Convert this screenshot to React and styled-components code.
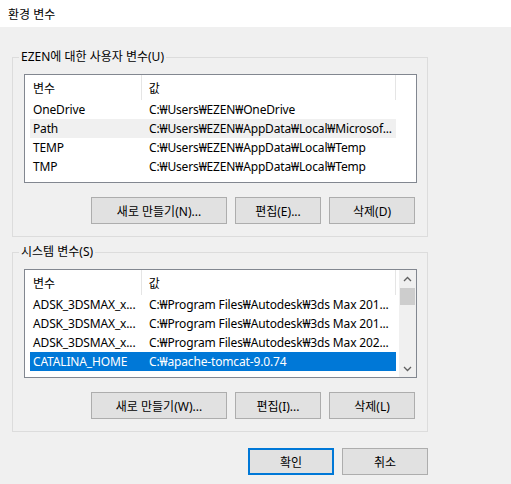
import React from 'react';
import styled, { createGlobalStyle } from 'styled-components';

const GlobalStyle = createGlobalStyle`
  body {
    margin: 0;
    background: #f0f0f0;
    font-family: "Noto Sans", "Noto Sans CJK KR", sans-serif;
    font-size: 12px;
    color: #000;
  }
`;

const Window = styled.div`
  width: 511px;
  height: 484px;
  overflow: hidden;
  background: #f0f0f0;
`;

const TitleBar = styled.div`
  height: 27px;
  background: #fff;
  padding-left: 8px;
  display: flex;
  align-items: center;
  font-size: 12px;
`;

const Content = styled.div`
  width: 416px;
  margin-left: 12px;
  padding-top: 30px;
`;

const Group = styled.div`
  position: relative;
  border: 1px solid #dcdcdc;
  padding: 16px 10px 12px 11px;
  margin-top: ${(p) => p.$gap || 0}px;
`;

const GroupLabel = styled.span`
  position: absolute;
  top: -9px;
  left: 6px;
  padding: 0 2px;
  line-height: 16px;
  background: #f0f0f0;
`;

const List = styled.div`
  height: 107px;
  border: 1px solid #828790;
  background: #fff;
  display: flex;
  overflow: hidden;
`;

const ListMain = styled.div`
  width: 371px;
  flex-shrink: 0;
`;

const Header = styled.div`
  display: flex;
  height: 25px;
  align-items: stretch;
`;

const HeaderCell = styled.div`
  width: ${(p) => p.$w}px;
  padding-left: ${(p) => p.$pad}px;
  box-sizing: border-box;
  border-right: 1px solid #e5e5e5;
  display: flex;
  align-items: center;
`;

const Row = styled.div`
  display: flex;
  height: 19px;
  align-items: center;
  margin-left: 5px;
  white-space: nowrap;
  letter-spacing: -0.15px;
  background: ${(p) => (p.$selected ? '#0078d7' : p.$hover ? '#f0f0f0' : 'transparent')};
  color: ${(p) => (p.$selected ? '#fff' : '#000')};
`;

const Cell = styled.div`
  width: ${(p) => p.$w}px;
  padding-left: ${(p) => p.$pad}px;
  box-sizing: border-box;
  overflow: hidden;
`;

const ScrollBar = styled.div`
  width: 17px;
  margin-left: auto;
  background: #f0f0f0;
  display: flex;
  flex-direction: column;
  align-items: center;
`;

const Arrow = styled.div`
  height: 17px;
  width: 17px;
  display: flex;
  align-items: center;
  justify-content: center;
`;

const Thumb = styled.div`
  width: 15px;
  height: 17px;
  margin-top: 1px;
  background: #cdcdcd;
`;

const Spacer = styled.div`
  flex: 1;
`;

const ButtonRow = styled.div`
  display: flex;
  justify-content: flex-end;
  gap: 8px;
  margin-top: ${(p) => p.$top}px;
  margin-right: ${(p) => p.$right || 0}px;
`;

const Button = styled.button`
  width: ${(p) => p.$w}px;
  height: 27px;
  box-sizing: border-box;
  background: #e1e1e1;
  border: ${(p) => (p.$default ? '2px solid #0078d7' : '1px solid #adadad')};
  font-family: inherit;
  font-size: 12px;
  color: #000;
  padding: 0;
`;

const Chevron = ({ up }) => (
  <svg width="9" height="6" viewBox="0 0 9 6">
    <path
      d={up ? 'M1 5 L4.5 1.5 L8 5' : 'M1 1 L4.5 4.5 L8 1'}
      fill="none"
      stroke="#606060"
      strokeWidth="1.3"
    />
  </svg>
);

const userVars = [
  ['OneDrive', 'C:₩Users₩EZEN₩OneDrive'],
  ['Path', 'C:₩Users₩EZEN₩AppData₩Local₩Microsof...'],
  ['TEMP', 'C:₩Users₩EZEN₩AppData₩Local₩Temp'],
  ['TMP', 'C:₩Users₩EZEN₩AppData₩Local₩Temp'],
];

const systemVars = [
  ['ADSK_3DSMAX_x...', 'C:₩Program Files₩Autodesk₩3ds Max 201...'],
  ['ADSK_3DSMAX_x...', 'C:₩Program Files₩Autodesk₩3ds Max 201...'],
  ['ADSK_3DSMAX_x...', 'C:₩Program Files₩Autodesk₩3ds Max 202...'],
  ['CATALINA_HOME', 'C:₩apache-tomcat-9.0.74'],
];

function VarList({ rows, hoverIndex, selectedIndex, scroll }) {
  return (
    <List>
      <ListMain>
        <Header>
          <HeaderCell $w={117} $pad={8}>변수</HeaderCell>
          <HeaderCell $w={255} $pad={7}>값</HeaderCell>
        </Header>
        {rows.map(([name, value], i) => (
          <Row key={i} $hover={i === hoverIndex} $selected={i === selectedIndex}>
            <Cell $w={112} $pad={3}>{name}</Cell>
            <Cell $w={254} $pad={7}>{value}</Cell>
          </Row>
        ))}
      </ListMain>
      {scroll && (
        <ScrollBar>
          <Arrow><Chevron up /></Arrow>
          <Thumb />
          <Spacer />
          <Arrow><Chevron /></Arrow>
        </ScrollBar>
      )}
    </List>
  );
}

function App() {
  return (
    <>
      <GlobalStyle />
      <Window>
        <TitleBar>환경 변수</TitleBar>
        <Content>
          <Group>
            <GroupLabel>EZEN에 대한 사용자 변수(U)</GroupLabel>
            <VarList rows={userVars} hoverIndex={1} />
            <ButtonRow $top={14} $right={2}>
              <Button $w={136}>새로 만들기(N)...</Button>
              <Button $w={86}>편집(E)...</Button>
              <Button $w={86}>삭제(D)</Button>
            </ButtonRow>
          </Group>
          <Group $gap={15}>
            <GroupLabel>시스템 변수(S)</GroupLabel>
            <VarList rows={systemVars} selectedIndex={3} scroll />
            <ButtonRow $top={14} $right={2}>
              <Button $w={136}>새로 만들기(W)...</Button>
              <Button $w={86}>편집(I)...</Button>
              <Button $w={86}>삭제(L)</Button>
            </ButtonRow>
          </Group>
          <ButtonRow $top={16}>
            <Button $w={86} $default>확인</Button>
            <Button $w={86}>취소</Button>
          </ButtonRow>
        </Content>
      </Window>
    </>
  );
}

export default App;
